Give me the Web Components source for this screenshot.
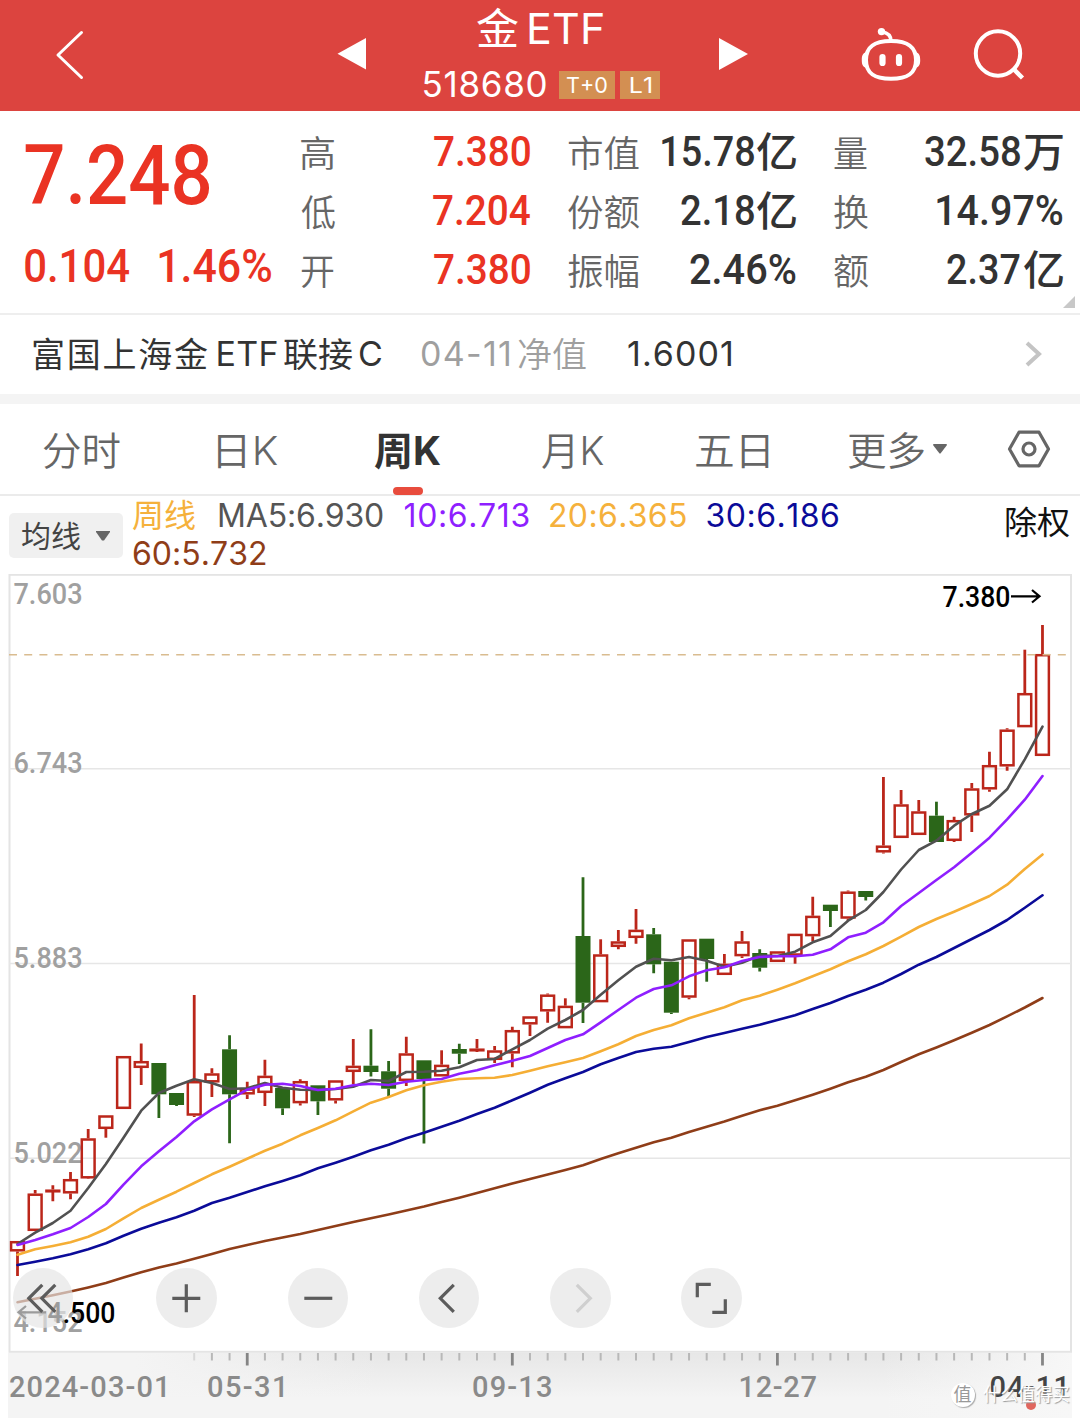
<!DOCTYPE html>
<html lang="zh-CN">
<head>
<meta charset="utf-8">
<title>金ETF 518680</title>
<style>
    html, body {
        margin: 0;
        background: #fff;
    }
    body {
        width: 1080px;
        height: 1418px;
        overflow: hidden;
        font-family: Inter, "Noto Sans CJK SC", sans-serif;
        font-kerning: none;
        color: #333;
    }
</style>
</head>
<body>
<stock-app></stock-app>

<script>
const DIN = 'Roboto, "Noto Sans CJK SC", sans-serif';
const pen = document.createElement('canvas').getContext('2d');

// Text that fills exactly the given width.
// Default mode squeezes the glyphs, "track" only changes the letter spacing.
class FitText extends HTMLElement {
    constructor() {
        super();
        this.attachShadow({ mode: 'open' });
        this.shadowRoot.innerHTML = `
        <style>
        :host{
            display:inline-block;
            white-space:nowrap;
            flex:none;
        }
        span{
            display:inline-block;
            transform-origin:0 50%;
        }
        </style>
        <span><slot></slot></span>
        `
    }
    connectedCallback() {
        const w = parseFloat(this.getAttribute('w'));
        const text = this.textContent;
        const span = this.shadowRoot.querySelector('span');
        const cs = getComputedStyle(this);
        pen.font = `${cs.fontWeight} ${cs.fontSize} ${cs.fontFamily}`;
        pen.fontKerning = 'none';
        const m = pen.measureText(text);
        const left = m.actualBoundingBoxLeft;
        const ink = left + m.actualBoundingBoxRight;
        this.style.width = w + 'px';
        if (this.hasAttribute('track')) {
            span.style.letterSpacing = (w - ink) / (text.length - 1) + 'px';
            span.style.transform = `translateX(${left}px)`;
        } else {
            const s = w / ink;
            span.style.transform = `translateX(${left * s}px) scaleX(${s})`;
        }
    }
}
customElements.define('fit-text', FitText)

class TradeHeader extends HTMLElement {
    constructor() {
        super();
        this.attachShadow({ mode: 'open' });
        this.shadowRoot.innerHTML = `
        <style>
        :host{
            display:grid;
            grid-template-columns:337px 30px 352px 29px 1fr;
            height:111px;
            background:#dc443f;
            color:#fff;
        }
        svg{
            display:block;
            fill:none;
            stroke:#fff;
        }
        .back{
            padding:29px 0 0 54px;
        }
        .step{
            padding-top:37px;
        }
        .step svg{
            fill:#fff;
            stroke:none;
        }
        .name{
            display:flex;
            gap:11px;
            padding-left:110px;
            height:56px;
            line-height:56px;
            font-size:43px;
        }
        .name :first-child{
            font-size:42px;
            line-height:58px;
        }
        .code{
            display:flex;
            align-items:center;
            padding-left:56.500px;
            height:56px;
            line-height:56px;
            font-size:35px;
        }
        .tag{
            display:flex;
            justify-content:center;
            height:28px;
            line-height:28px;
            font-size:22px;
            background:#d38f52;
        }
        .t0{
            width:56px;
            margin:1px 5px 0 13.500px;
        }
        .l1{
            width:40px;
            margin-top:1px;
        }
        .icons{
            display:flex;
            gap:50px;
            padding:26px 0 0 112px;
        }
        </style>
        <div class="back">
            <svg width="32" height="52" stroke-width="3" stroke-linecap="round" stroke-linejoin="round"><path d="M27.500 3.500L4 26L27.500 48.500"/></svg>
        </div>
        <div class="step"><svg width="30" height="34"><path d="M.5 16.800L29 1V32.500Z"/></svg></div>
        <div>
            <div class="name"><fit-text w="41">金</fit-text><fit-text w="74" track>ETF</fit-text></div>
            <div class="code">
                <fit-text w="122" track>518680</fit-text>
                <div class="tag t0"><fit-text w="40">T+0</fit-text></div>
                <div class="tag l1"><fit-text w="21">L1</fit-text></div>
            </div>
        </div>
        <div class="step"><svg width="30" height="34"><path d="M0 1V33L29 17Z"/></svg></div>
        <div class="icons">
            <svg width="62" height="58" viewBox="860 26 62 58" stroke-width="4">
                <path d="M891 41C908 41 916 47 916 60C916 74 907 78.700 891 78.700C875 78.700 866 74 866 60C866 47 874 41 891 41Z"/>
                <path d="M891 41C891 36 887.500 32.800 882 31.800" stroke-width="3.500"/>
                <circle cx="881.500" cy="31.600" r="3.700" fill="#fff" stroke="none"/>
                <path d="M866 52C862 53.500 861.800 57 861.800 60C861.800 63 862 66.500 866 68ZM916 52C920 53.500 920.200 57 920.200 60C920.200 63 920 66.500 916 68Z" fill="#fff" stroke="none"/>
                <path d="M882.500 57V63M899 57V63" stroke-width="6.200" stroke-linecap="round"/>
            </svg>
            <svg width="56" height="58" viewBox="972 26 56 58" stroke-width="4">
                <circle cx="998" cy="53.500" r="22.200"/>
                <path d="M1014 69.500L1022.500 78" stroke-width="4.500"/>
            </svg>
        </div>
        `
    }
}
customElements.define('trade-header', TradeHeader)

class StatItem extends HTMLElement {
    constructor() {
        super();
        this.attachShadow({ mode: 'open' });
    }
    connectedCallback() {
        const [label, lw, value, vw, unit] = this.getAttribute('data').split(' ');
        this.shadowRoot.innerHTML = `
        <style>
        :host{
            display:flex;
            justify-content:space-between;
            height:59px;
            padding-right:1.500px;
        }
        .label{
            font-size:36px;
            font-weight:350;
            line-height:62px;
            color:#666;
        }
        .value{
            display:flex;
            gap:3.500px;
            font:500 42px/58px ${DIN};
        }
        .unit{
            font-size:41px;
            line-height:60px;
        }
        </style>
        <fit-text class="label" w="${lw}">${label}</fit-text>
        <div class="value"><fit-text w="${vw}">${value}</fit-text>${unit ? `<fit-text class="unit" w="39">${unit}</fit-text>` : ''}</div>
        `
    }
}
customElements.define('stat-item', StatItem)

class QuotePanel extends HTMLElement {
    constructor() {
        super();
        this.attachShadow({ mode: 'open' });
        this.shadowRoot.innerHTML = `
        <style>
        :host{
            display:grid;
            grid-template-columns:239.500px 230px 230px 230px;
            column-gap:36.500px;
            box-sizing:border-box;
            height:204px;
            padding-left:25px;
            border-bottom:2px solid #eee;
            position:relative;
            color:#333;
        }
        .red, .main{
            color:#ea3323;
        }
        .main{
            font:500 83px/84px ${DIN};
            padding-top:22.500px;
        }
        .change{
            display:flex;
            gap:30px;
            font-size:46px;
            line-height:60px;
            margin-top:18px;
        }
        .col{
            padding-top:11.500px;
        }
        i{
            position:absolute;
            right:5px;
            top:185px;
            border:6px solid transparent;
            border-right-color:#c8c8c8;
            border-bottom-color:#c8c8c8;
        }
        </style>
        <div class="main">
            <fit-text w="185">7.248</fit-text>
            <div class="change"><fit-text w="104">0.104</fit-text><fit-text w="112">1.46%</fit-text></div>
        </div>
        <div class="col red"><stat-item data="高 33 7.380 96"></stat-item><stat-item data="低 34 7.204 97"></stat-item><stat-item data="开 33 7.380 96"></stat-item></div>
        <div class="col"><stat-item data="市值 71 15.78 92 亿"></stat-item><stat-item data="份额 71 2.18 73 亿"></stat-item><stat-item data="振幅 71 2.46% 106"></stat-item></div>
        <div class="col"><stat-item data="量 33 32.58 95 万"></stat-item><stat-item data="换 34 14.97% 126"></stat-item><stat-item data="额 34 2.37 73 亿"></stat-item></div>
        <i></i>
        `
    }
}
customElements.define('quote-panel', QuotePanel)

class FundRow extends HTMLElement {
    constructor() {
        super();
        this.attachShadow({ mode: 'open' });
        this.shadowRoot.innerHTML = `
        <style>
        :host{
            display:flex;
            align-items:center;
            box-sizing:border-box;
            height:89px;
            padding:0 38px 2px 33px;
            border-bottom:10px solid #f4f4f4;
            font-size:34px;
            line-height:77px;
        }
        .cn{
            padding-top:1.500px;
        }
        .date{
            color:#9f9f9f;
            margin-left:41px;
        }
        .nav{
            margin-left:42px;
        }
        svg{
            display:block;
            margin-left:auto;
        }
        </style>
        <fit-text class="cn" w="175" track>富国上海金</fit-text>
        <fit-text w="59" track style="margin-left:9.5px">ETF</fit-text>
        <fit-text class="cn" w="68" style="margin-left:7px">联接</fit-text>
        <fit-text w="21" style="margin-left:8.5px">C</fit-text>
        <fit-text class="date" w="87" track>04-11</fit-text>
        <fit-text class="cn" w="68" style="margin-left:9px;color:#9f9f9f;font-weight:350">净值</fit-text>
        <fit-text class="nav" w="103" track>1.6001</fit-text>
        <svg width="17" height="26" fill="none" stroke="#c4c4c4" stroke-width="4"><path d="M2 2L14 13L2 24"/></svg>
        `
    }
}
customElements.define('fund-row', FundRow)

class PeriodTabs extends HTMLElement {
    constructor() {
        super();
        this.attachShadow({ mode: 'open' });
        this.shadowRoot.innerHTML = `
        <style>
        :host{
            display:flex;
            align-items:center;
            box-sizing:border-box;
            height:92px;
            padding-left:43px;
            border-bottom:2px solid #ebebeb;
            font-size:39px;
            font-weight:350;
            line-height:93px;
            color:#666;
        }
        .tab{
            position:relative;
            height:90px;
        }
        .on{
            color:#333;
            font-weight:700;
        }
        .on::after{
            content:'';
            position:absolute;
            left:19px;
            bottom:-1px;
            width:30.500px;
            height:8px;
            border-radius:4px;
            background:#e84c3d;
        }
        .tab, svg{
            display:block;
            flex:none;
        }
        </style>
        <div class="tab" style="width:174.500px"><fit-text w="77">分时</fit-text></div>
        <div class="tab" style="width:156px"><fit-text w="60">日K</fit-text></div>
        <div class="tab on" style="width:168.500px"><fit-text w="67">周K</fit-text></div>
        <div class="tab" style="width:154px"><fit-text w="62">月K</fit-text></div>
        <div class="tab" style="width:151.500px"><fit-text w="73">五日</fit-text></div>
        <div class="tab" style="width:84.500px"><fit-text w="76">更多</fit-text></div>
        <svg width="16" height="12" fill="#666"><path d="M1.500 1H14.500L15 2L8.500 10.500H7.500L1 2Z"/></svg>
        <svg width="46" height="42" viewBox="-23 -21 46 42" fill="none" stroke="#666" stroke-width="3.200" stroke-linejoin="round" style="margin-left:58px"><path d="M-19.500 0L-10 -16.800H10L19.500 0L10 16.800H-10Z"/><circle r="6"/></svg>
        `
    }
}
customElements.define('period-tabs', PeriodTabs)

class MaLegend extends HTMLElement {
    constructor() {
        super();
        this.attachShadow({ mode: 'open' });
        this.shadowRoot.innerHTML = `
        <style>
        :host{
            display:flex;
            box-sizing:border-box;
            height:78px;
            padding:0 11px 0 9px;
            font-size:32px;
        }
        .pick{
            display:flex;
            align-items:center;
            gap:15px;
            box-sizing:border-box;
            width:114px;
            height:45px;
            margin-top:17px;
            padding-left:13px;
            border-radius:5px;
            background:#f0f0f0;
            font-size:30px;
            line-height:46px;
            color:#444;
        }
        .lines{
            margin-left:10px;
            padding-top:1px;
            line-height:38px;
            flex:1;
        }
        .lines div{
            display:flex;
        }
        .adj{
            color:#111;
            margin-top:9px;
            line-height:36px;
        }
        </style>
        <div class="pick"><fit-text w="58">均线</fit-text><svg width="16" height="12" fill="#666"><path d="M1 1H15V2L9 10.500H7L1 2Z"/></svg></div>
        <div class="lines">
            <div>
                <fit-text w="62" style="color:#f5b13c">周线</fit-text>
                <fit-text w="164" track style="color:#555;margin-left:24px">MA5:6.930</fit-text>
                <fit-text w="124" track style="color:#8f1fff;margin-left:21.500px">10:6.713</fit-text>
                <fit-text w="136" track style="color:#f5b13c;margin-left:21.500px">20:6.365</fit-text>
                <fit-text w="131.500" track style="color:#0b0b99;margin-left:20.500px">30:6.186</fit-text>
            </div>
            <div><fit-text w="133" track style="color:#8f3d18">60:5.732</fit-text></div>
        </div>
        <fit-text class="adj" w="63">除权</fit-text>
        `
    }
}
customElements.define('ma-legend', MaLegend)

const STEP = 17.672;
const X0 = 17.5;
// [up/down, high, body top, body bottom, low]
const candles = [
    'r 1241 1241 1251.5 1276', 'r 1190 1193.5 1231 1231', 'r 1185.3 1189.5 1191.5 1201.3', 'r 1172 1179 1193.5 1199.3',
    'r 1129 1138.3 1178.5 1179', 'r 1115.3 1115.3 1129 1137.7', 'r 1056 1056 1109 1109', 'r 1043.5 1061 1068 1085',
    'g 1063 1063 1094.3 1118', 'g 1093 1093 1105 1106', 'r 995 1081 1115.7 1117', 'r 1068.3 1073.3 1082.5 1097',
    'g 1035.3 1049.3 1094.3 1143.3', 'r 1081.7 1088.3 1094.5 1099', 'r 1059.7 1075.7 1093 1106', 'g 1088 1088 1108.3 1115',
    'r 1079.3 1081 1103.3 1105.5', 'g 1085.3 1085.3 1101.3 1115', 'r 1080.3 1080.3 1100.5 1103.5', 'r 1039 1065.7 1072 1084.3',
    'g 1029.3 1065.7 1072 1076.5', 'g 1061 1071.3 1088.7 1096', 'r 1036.7 1053.3 1081 1086', 'g 1060.3 1060.3 1079 1143.5',
    'r 1050.3 1064.7 1076.5 1076.5', 'g 1043.7 1049 1053.7 1064', 'r 1039 1048.5 1051 1052', 'r 1046 1050.3 1060 1063',
    'r 1026.7 1030 1053.5 1067.3', 'r 1016.3 1016.3 1024.5 1036', 'r 993.5 994.5 1011.5 1022.7', 'r 998.3 1005.7 1028.3 1028.3',
    'g 877.3 936 1002.7 1023', 'r 939.3 954.3 1002.3 1002.3', 'r 930 941.3 947 949.3', 'r 909 929.7 938 943.7',
    'g 928 934.3 964.3 973.3', 'g 961.7 961.7 1012.7 1014', 'r 939.3 939.3 997.7 999.3', 'g 938.7 938.7 959 981.7',
    'r 954 963.7 975 975', 'r 931 941.3 956.3 958', 'g 949.3 953 967.7 971.5', 'r 951.3 951.3 962 962',
    'r 933.7 933.7 955.7 963.7', 'r 896.7 915.7 936.3 941.5', 'g 904.7 904.7 911 927', 'r 890.5 891.5 918.7 921',
    'g 891 891 897 900.5', 'r 777 845.5 852.5 853.5', 'r 790 804.3 838 838', 'r 800 811.3 835 835',
    'g 801.7 815.7 842 842', 'r 816.7 820 841 842', 'r 783 788.3 815.5 832', 'r 751.7 765 789.5 791.7',
    'r 728.3 729.5 766.5 770.7', 'r 649.7 693 727.3 727.3', 'r 625 654 756 756'
];
const averages = {
    '#f5ae35': '1254.7 1249.3 1246 1242.3 1236.7 1229 1218.3 1208 1199.7 1191.7 1183 1174.3 1166.7 1158.7 1150.7 1143.7 1135.3 1128 1120.3 1111.3 1102.7 1097 1090.3 1085.3 1081.7 1079 1078.3 1077.7 1075 1070.7 1066.3 1062.3 1058 1051.3 1044.3 1036 1030 1025.3 1018.3 1012.7 1007.3 1000.3 995.7 989.7 983.3 976.3 969.3 961.3 954.3 946 936.7 927 919 911.7 904 896 884.7 869 854.5',
    '#0b0b99': '1265 1261.7 1258.3 1254.3 1249.3 1243.3 1235.7 1228.7 1222.7 1217.3 1210.7 1203 1197.7 1192 1186.3 1181 1175.3 1168.3 1162.7 1156.7 1150.3 1144.7 1138.3 1132.7 1126.7 1120.7 1114 1107.7 1100.3 1092.7 1084.7 1078.3 1072 1064.3 1058 1052 1048.7 1046.7 1042 1037 1033 1028.7 1024.7 1020 1015.3 1009 1003 996 989.7 982.7 974 964.7 957 948 939 930 920 907.7 895.3',
    '#8f3d18': '1302.3 1298.8 1295.3 1291.5 1287.4 1283 1277.6 1272.3 1267.5 1263.5 1258.7 1254 1249 1245 1241 1237.5 1234 1230 1226 1222 1218.2 1214.5 1210.5 1206.5 1202 1197.7 1193 1188.3 1183.5 1179 1174.5 1170 1165.200 1159 1153.3 1147.7 1142.3 1137.7 1132 1126.7 1121.5 1115.7 1110.3 1105.7 1100.3 1094.7 1088.7 1082.3 1076.7 1070 1062 1054.3 1047.5 1040.3 1032.800 1025 1016.4 1007.500 998',
    '#515151': '1244 1232.7 1223 1210.7 1188 1164 1137.7 1110.7 1093 1085.7 1079.3 1083 1089 1088.3 1083 1087.7 1089.7 1090 1089 1086.7 1080 1081 1072 1071.7 1070.7 1067.3 1060 1059 1049.3 1040 1028.7 1020 1010 994.7 980.3 966.7 958.7 960.3 957 960.7 966.7 962.7 955.5 956 951.7 942.3 936 920.7 910 892 869.500 850 840.7 825.7 814 805.7 789.3 759.3 726.7',
    '#8f1fff': '1245 1240 1234.3 1228 1217 1204 1184.7 1166.3 1151.3 1137 1121.3 1109.3 1099.3 1089.7 1084.7 1083.7 1086 1090 1088.7 1085.3 1083.7 1085 1081.7 1080 1079 1073.7 1070.3 1065.3 1060.7 1056 1048 1040 1034.3 1022.3 1010 997.7 989 985.3 976.3 970.3 967.3 961 957 956.3 956.3 954.7 949.3 937.3 932.7 922.3 906 893 880 867.3 852.7 837.7 819.3 799.7 776'
};

class KChart extends HTMLElement {
    constructor() {
        super();
        this.attachShadow({ mode: 'open' });
        this.shadowRoot.innerHTML = `
        <style>
        :host{
            display:block;
            height:779px;
            position:relative;
        }
        svg{
            display:block;
        }
        text{
            font:500 29.500px ${DIN};
            fill:#a0a0a0;
        }
        .mark{
            fill:#000;
        }
        .mark + path{
            stroke:#000;
        }
        .tools{
            position:absolute;
            left:12.700px;
            top:693.700px;
            display:flex;
        }
        </style>
        <svg width="1080" height="779" viewBox="0 574 1080 779" fill="none">
            <rect x="9.500" y="574.800" width="1061.500" height="777" stroke="#e4e4e4" stroke-width="2"/>
            <path d="M9 768.800H1071M9 963.600H1071M9 1158.300H1071" stroke="#e6e6e6" stroke-width="1.500"/>
            ${this.scale()}
            ${candles.map((c, i) => this.candle(c, i)).join('')}
            ${Object.keys(averages).map(k => this.line(k)).join('')}
            <path d="M9 654.800H1071" stroke="#d9bc90" stroke-width="1.500" stroke-dasharray="8 7.200"/>
            <text class="mark" x="942.500" y="606.500" textLength="68" lengthAdjust="spacingAndGlyphs">7.380</text>
            <path d="M1011 596.300H1039M1032 590L1039.500 596.300L1032 602.500" stroke-width="2.200"/>
            <text class="mark" x="47.500" y="1323" textLength="68" lengthAdjust="spacingAndGlyphs">4.500</text>
            <path d="M46 1312.300H19M26 1306L18.500 1312.300L26 1318.500" stroke-width="2.200"/>
        </svg>
        <div class="tools"><slot></slot></div>
        `
    }
    scale() {
        const rows = [['7.603', 604], ['6.743', 773], ['5.883', 968], ['5.022', 1162.5], ['4.152', 1332]];
        return rows.map(r => `<text x="13.5" y="${r[1]}" textLength="69" lengthAdjust="spacingAndGlyphs">${r[0]}</text>`).join('');
    }
    candle(c, i) {
        const [kind, ...v] = c.split(' ');
        const [high, top, bottom, low] = v.map(Number);
        const x = X0 + i * STEP;
        const color = kind == 'r' ? '#bb261a' : '#2b6619';
        let s = `<path d="M${x} ${high}V${top}M${x} ${bottom}V${low}" stroke="${color}" stroke-width="2.8"/>`;
        if (kind == 'r') {
            const h = Math.max(bottom - top - 2.4, .6);
            s += `<rect x="${x - 6.4}" y="${top + 1.2}" width="12.8" height="${h}" stroke="${color}" stroke-width="2.5"/>`;
        } else {
            s += `<rect x="${x - 7.5}" y="${top}" width="15" height="${bottom - top}" fill="${color}"/>`;
        }
        return s;
    }
    line(color) {
        const points = averages[color].split(' ').map((y, i) => `${(X0 + i * STEP).toFixed(1)},${y}`).join(' ');
        return `<polyline points="${points}" stroke="${color}" stroke-width="2.6" stroke-linejoin="round" stroke-linecap="round"/>`;
    }
}
customElements.define('k-chart', KChart)

class ToolButton extends HTMLElement {
    constructor() {
        super();
        this.attachShadow({ mode: 'open' });
    }
    connectedCallback() {
        const icons = {
            first: 'M-1 -13.500L-14.500 0L-1 13.500M12 -13.500L-1.500 0L12 13.500',
            plus: 'M-14 0H14M0 -14V14',
            minus: 'M-14 0H14',
            prev: 'M4.500 -13.500L-9 0L4.500 13.500',
            next: 'M-3.500 -13.500L10 0L-3.500 13.500',
            full: 'M-14 -1V-14H-.500M1 14H14V1'
        };
        this.shadowRoot.innerHTML = `
        <style>
        :host{
            display:block;
            box-sizing:border-box;
            width:60.600px;
            height:60.600px;
            border-radius:50%;
            background:rgba(228, 228, 228, .68);
            color:#5c5c5c;
            margin-right:70.700px;
        }
        :host([icon=first]){
            margin-right:83px;
        }
        :host([off]){
            color:#cfcfcf;
        }
        svg{
            display:block;
        }
        </style>
        <svg width="60.600" height="60.600" viewBox="-30.300 -30.300 60.600 60.600" fill="none" stroke="currentColor" stroke-width="3.200"><path d="${icons[this.getAttribute('icon')]}"/></svg>
        `
    }
}
customElements.define('tool-button', ToolButton)

class DateAxis extends HTMLElement {
    constructor() {
        super();
        this.attachShadow({ mode: 'open' });
        let ticks = '';
        for (let i = 10; i < 59; i++) {
            const big = (i - 13) % 15 == 0;
            ticks += `<path d="M${X0 + i * STEP} 0V${big ? 12.5 : 7.5}" stroke="${big ? '#858585' : i == 10 ? '#d8d8d8' : '#b8b8b8'}" stroke-width="${big ? 2.8 : 2}"/>`;
        }
        this.shadowRoot.innerHTML = `
        <style>
        :host{
            display:block;
            height:65px;
            margin:0 8px;
            position:relative;
            background:linear-gradient(90deg, #f4f4f4 12%, transparent 35%, transparent 82%, #f7f7f7), linear-gradient(#e7e7e7, #f4f4f4 70%);
        }
        svg{
            display:block;
            margin-left:-8px;
        }
        .dates{
            display:flex;
            margin-top:1px;
            padding-left:2px;
            font:500 29px/40px ${DIN};
            color:#8a8a8a;
        }
        .now{
            color:#444;
        }
        .dot{
            position:absolute;
            left:1017.500px;
            top:47px;
            width:10px;
            height:10px;
            border-radius:50%;
            background:#e1665e;
        }
        .brand{
            position:absolute;
            left:942.500px;
            top:30px;
            display:flex;
            gap:8px;
            font-size:18px;
            line-height:24px;
            color:#fff;
            text-shadow:1px 1px 1px #999;
        }
        b{
            width:24px;
            height:24px;
            border-radius:50%;
            background:#fff;
            box-shadow:1px 1px 1px #aaa;
            text-align:center;
            font-weight:400;
            color:#999;
            text-shadow:none;
        }
        </style>
        <svg width="1080" height="13" fill="none">${ticks}</svg>
        <div class="dates">
            <fit-text w="155" track>2024-03-01</fit-text>
            <fit-text w="75" track style="margin-left:43px">05-31</fit-text>
            <fit-text w="78" track style="margin-left:190px">09-13</fit-text>
            <fit-text w="76" track style="margin-left:189.500px">12-27</fit-text>
            <fit-text w="74" track class="now" style="margin-left:174px">04-11</fit-text>
        </div>
        <div class="dot"></div>
        <div class="brand"><b>值</b><fit-text w="86">什么值得买</fit-text></div>
        `
    }
}
customElements.define('date-axis', DateAxis)

class StockApp extends HTMLElement {
    constructor() {
        super();
        this.attachShadow({ mode: 'open' });
        this.shadowRoot.innerHTML = `
        <style>
        :host{
            display:flex;
            flex-direction:column;
            width:1080px;
        }
        </style>
        <trade-header></trade-header>
        <quote-panel></quote-panel>
        <fund-row></fund-row>
        <period-tabs></period-tabs>
        <ma-legend></ma-legend>
        <k-chart>
            <tool-button icon="first"></tool-button>
            <tool-button icon="plus"></tool-button>
            <tool-button icon="minus"></tool-button>
            <tool-button icon="prev"></tool-button>
            <tool-button icon="next" off></tool-button>
            <tool-button icon="full"></tool-button>
        </k-chart>
        <date-axis></date-axis>
        `
    }
}
customElements.define('stock-app', StockApp)
</script>
</body>
</html>
